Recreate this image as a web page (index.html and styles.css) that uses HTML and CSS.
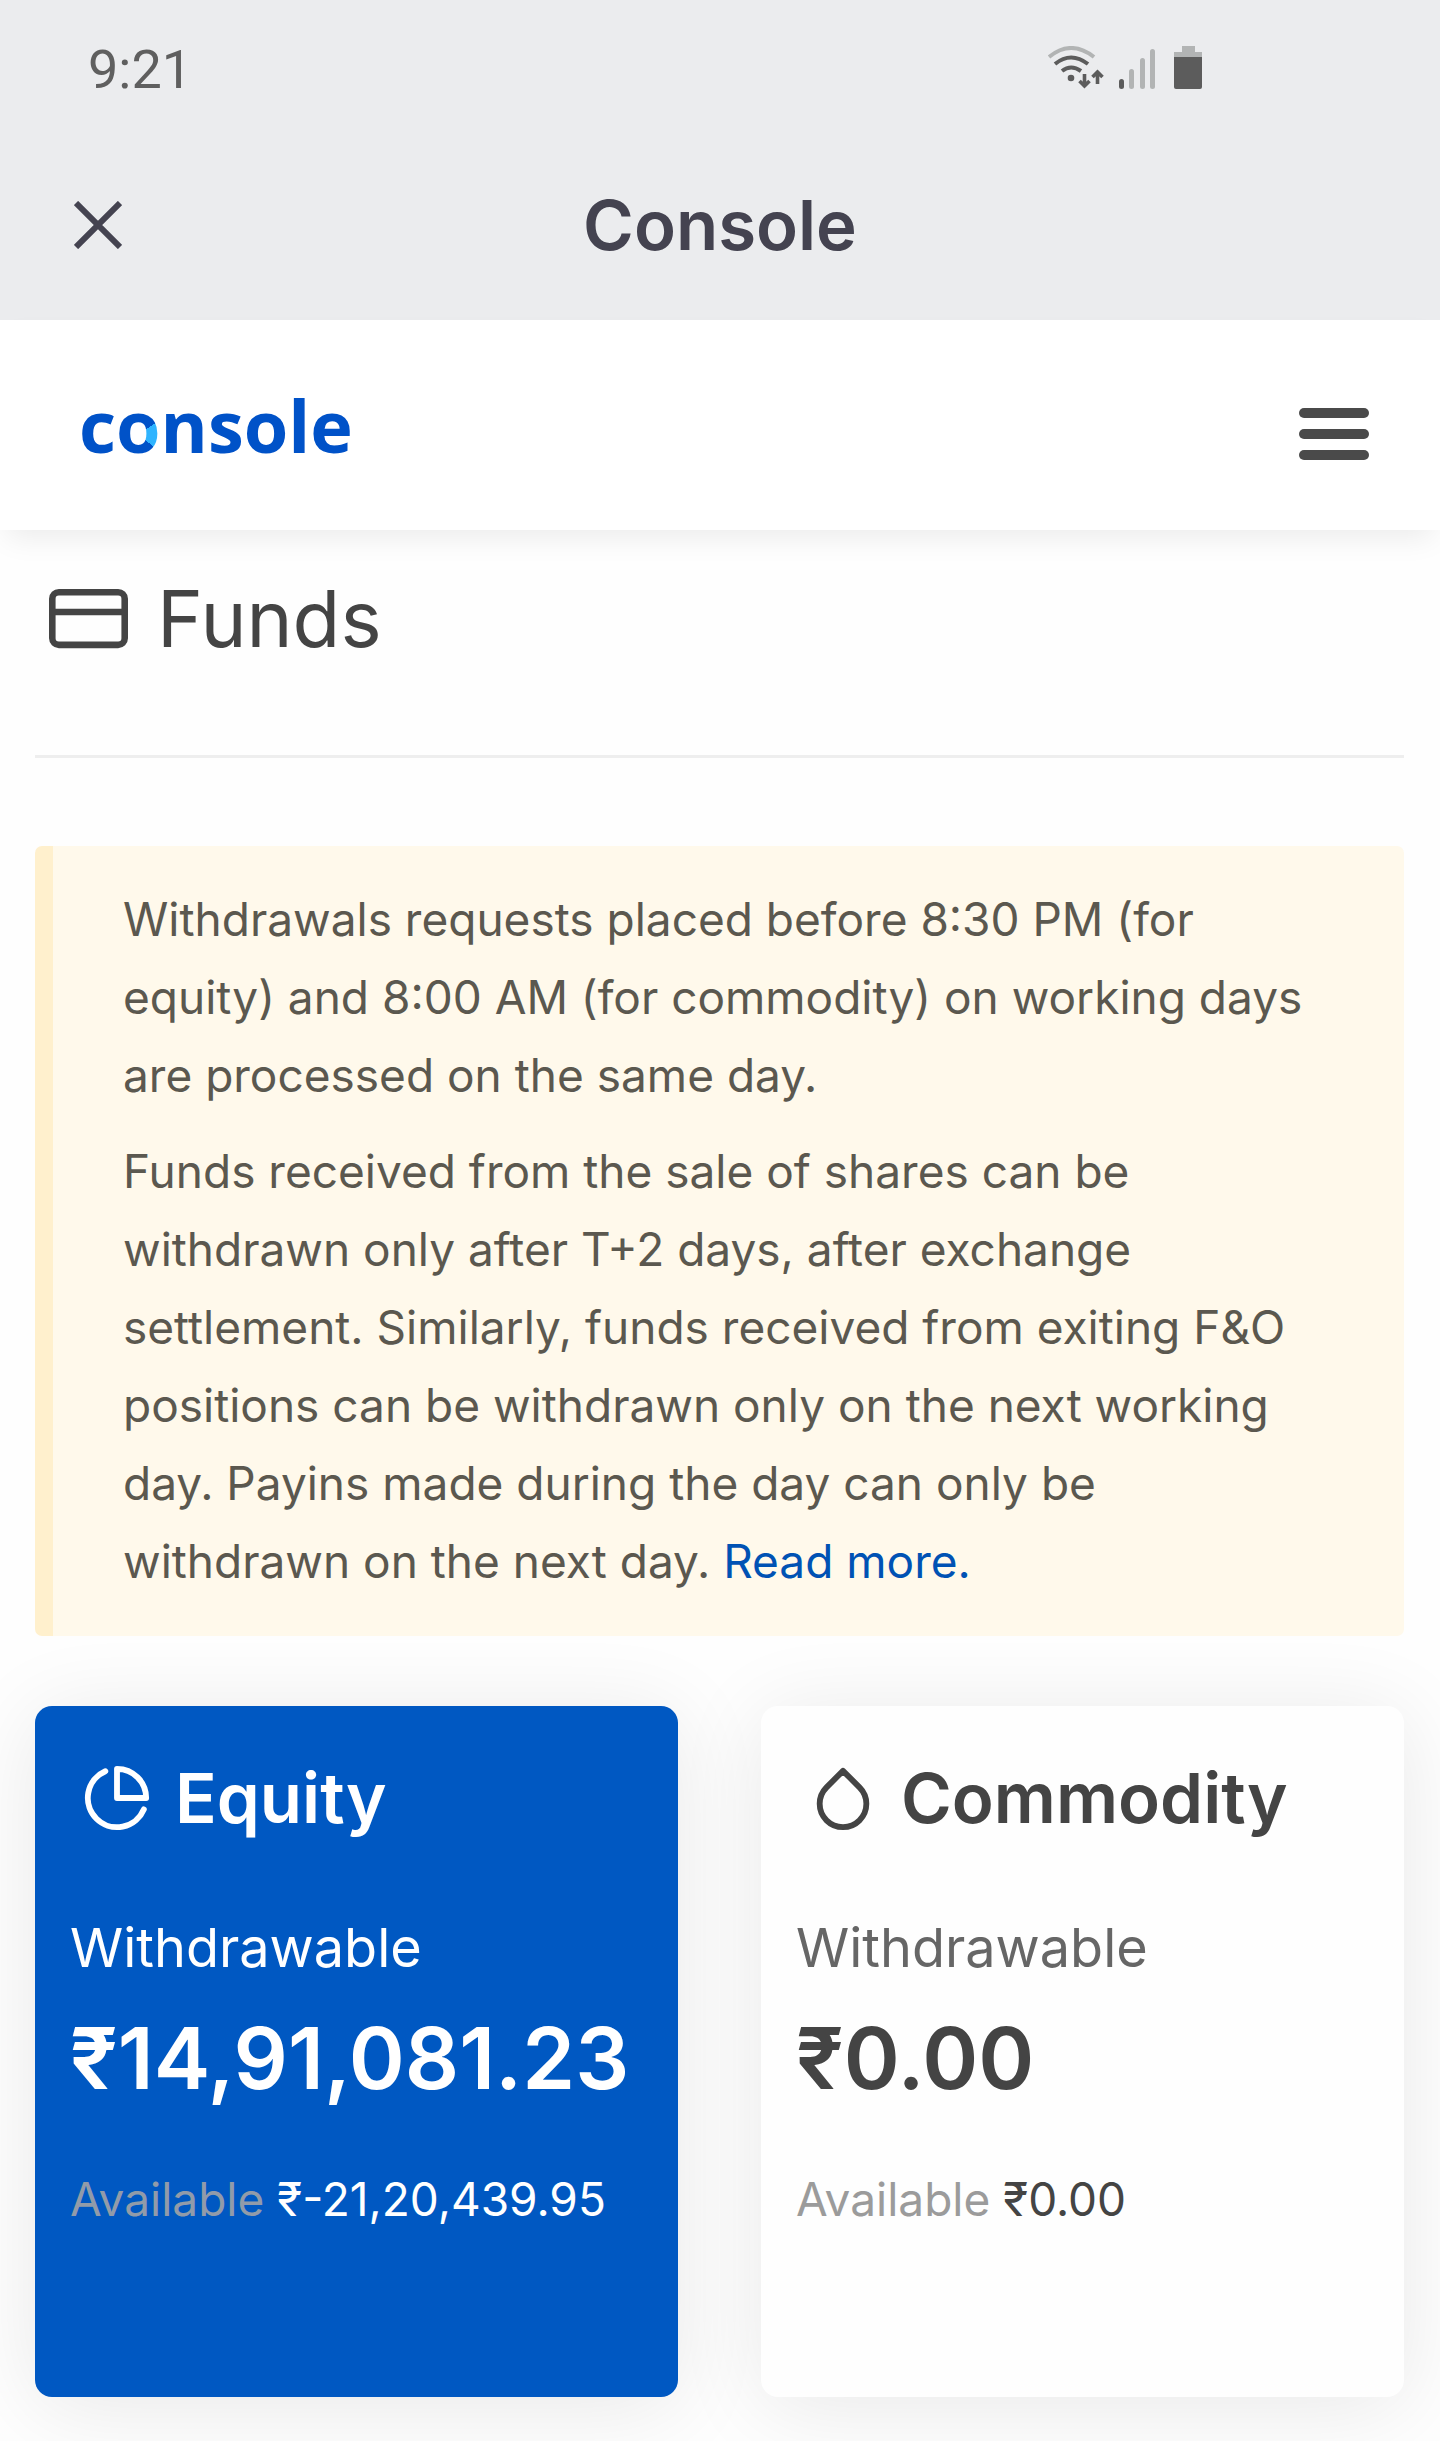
FILE: index.html
```html
<!DOCTYPE html>
<html lang="en">
  <head>
    <meta charset="UTF-8" />
    <meta name="viewport" content="width=device-width, initial-scale=1.0" />
    <title>Console</title>
    <link rel="stylesheet" href="styles.css">
  </head>
  <body>
    <div class="app-header">
      <div class="status-bar">
        <span class="clock">9:21</span>
        <svg class="status-icons" viewBox="0 0 154 43" aria-hidden="true">
          <!-- wifi -->
          <g fill="none" stroke="#5c5c5c" stroke-width="4">
            <path d="M1 11Q23 -7 46 11" stroke="#b2b4b4" />
            <path d="M7 18Q23 5 40 18" />
            <path d="M14 25Q23 18 33 25" />
          </g>
          <circle cx="23" cy="32" r="3.3" fill="#5c5c5c" />
          <g fill="none" stroke="#5c5c5c" stroke-width="3.6">
            <path d="M36.500 28v12M31.500 35l5 5 5-5" />
            <path d="M49.500 38V26M44.500 31l5-5 5 5" />
          </g>
          <!-- signal -->
          <rect x="71" y="33" width="5" height="10" rx="2.500" fill="#5c5c5c" />
          <g fill="#b2b4b4">
            <rect x="81" y="23" width="5" height="20" rx="2.500" />
            <rect x="92" y="12" width="5" height="31" rx="2.500" />
            <rect x="102" y="3" width="5" height="40" rx="2.500" />
            <!-- battery -->
            <path d="M134 0h13v6h7v6h-28V6h8z" />
          </g>
          <path d="M126 11h28v30q0 2-2 2h-24q-2 0-2-2z" fill="#5c5c5c" />
        </svg>
      </div>
      <div class="title-bar">
        <button type="button" class="close-btn" aria-label="Close">
          <svg viewBox="0 0 48 48"><path d="M2 2l44 44M46 2L2 46" /></svg>
        </button>
        <h1>Console</h1>
      </div>
    </div>

    <nav class="navbar">
      <a href="#" class="logo">c<span class="logo-o">o</span>nsole</a>
      <button type="button" class="menu-btn" aria-label="Menu">
        <span></span>
        <span></span>
        <span></span>
      </button>
    </nav>

    <main>
      <h2 class="page-title">
        <svg viewBox="0 0 24 24">
          <rect x="1" y="4" width="22" height="16" rx="2" />
          <path d="M1 10h22" />
        </svg>
        Funds
      </h2>

      <div class="notice">
        <p>
          Withdrawals requests placed before 8:30 PM (for equity) and 8:00 AM
          (for commodity) on working days are processed on the same day.
        </p>
        <p>
          Funds received from the sale of shares can be withdrawn only after
          T+2 days, after exchange settlement. Similarly, funds received from
          exiting F&amp;O positions can be withdrawn only on the next working
          day. Payins made during the day can only be withdrawn on the next
          day. <a href="#">Read more.</a>
        </p>
      </div>

      <div class="cards">
        <section class="card active">
          <h3>
            <svg viewBox="0 0 24 24">
              <path d="M21.210 15.890A10 10 0 1 1 8 2.830" />
              <path d="M22 12A10 10 0 0 0 12 2v10z" />
            </svg>
            Equity
          </h3>
          <div class="label">Withdrawable</div>
          <div class="amount">₹14,91,081.23</div>
          <div class="available"><span>Available</span> ₹-21,20,439.95</div>
        </section>

        <section class="card">
          <h3>
            <svg viewBox="0 0 24 24">
              <path d="M12 2.690l5.660 5.660a8 8 0 1 1-11.310 0z" />
            </svg>
            Commodity
          </h3>
          <div class="label">Withdrawable</div>
          <div class="amount">₹0.00</div>
          <div class="available"><span>Available</span> ₹0.00</div>
        </section>
      </div>
    </main>
  </body>
</html>
```
FILE: styles.css
```css
* {
  box-sizing: border-box;
}
body {
  margin: 0;
  background-color: #fefefe;
  color: #444;
  font-family: Inter, "Noto Sans", sans-serif;
  font-size: 46px;
}
h1,
h2,
h3,
p {
  margin: 0;
}
svg {
  display: block;
  flex: none;
}
button {
  padding: 0;
  border: none;
  background: none;
  cursor: pointer;
}
a {
  color: #0052b4;
  text-decoration: none;
}

/* header */
.app-header {
  background-color: #ebecee;
}
.status-bar {
  display: flex;
  justify-content: space-between;
  align-items: center;
  height: 134px;
  padding: 0 238px 0 88px;
}
.clock {
  padding-top: 4px;
  font-family: Roboto, sans-serif;
  font-size: 54px;
  color: #5f5f5f;
}
.status-icons {
  width: 154px;
  height: 43px;
}
.title-bar {
  display: grid;
  grid-template-columns: 48px 1fr 48px;
  align-items: center;
  height: 186px;
  padding: 0 74px 4px;
}
.close-btn svg {
  width: 48px;
  height: 48px;
  stroke: #444350;
  stroke-width: 6;
}
h1 {
  font-size: 69px;
  font-weight: 600;
  line-height: 84px;
  text-align: center;
  color: #444350;
}

/* navbar */
.navbar {
  display: flex;
  justify-content: space-between;
  align-items: center;
  height: 210px;
  padding: 0 71px 0 79px;
  background-color: #fff;
  box-shadow: 0 14px 28px -7px rgba(0, 0, 0, 0.08);
}
.logo {
  font-family: "Open Sans", sans-serif;
  font-size: 72px;
  font-weight: 700;
  line-height: 92px;
  color: #0052c8;
}
.logo-o {
  background: conic-gradient(from 55deg at 50% 60%, #2fb4ff 73deg, #0052c8 73deg);
  -webkit-background-clip: text;
  background-clip: text;
  color: transparent;
}
.menu-btn {
  display: grid;
  gap: 11px;
  width: 70px;
  margin-top: 18px;
}
.menu-btn span {
  height: 10px;
  border-radius: 5px;
  background-color: #4a4a4a;
}

/* content */
main {
  padding: 0 36px 44px 35px;
}
.page-title {
  display: flex;
  align-items: center;
  gap: 29px;
  padding: 49px 14px 97px;
  border-bottom: 3px solid #eee;
  font-size: 78px;
  font-weight: 400;
  line-height: 79px;
}
.page-title svg {
  width: 79px;
  height: 79px;
}
.page-title svg,
.card svg {
  fill: none;
  stroke: currentColor;
  stroke-width: 2;
  stroke-linecap: round;
  stroke-linejoin: round;
}
.notice {
  margin-top: 88px;
  padding: 34px 70px 36px;
  border-left: 18px solid #fff0cd;
  border-radius: 7px;
  background-color: #fff9eb;
  color: #5b584f;
  line-height: 78px;
}
.notice p + p {
  margin-top: 18px;
}

/* fund cards */
.cards {
  display: grid;
  grid-template-columns: 1fr 1fr;
  gap: 83px;
  margin-top: 70px;
}
.card {
  padding: 57px 35px 159px;
  border-radius: 17px;
  background-color: #fefefe;
  box-shadow: 0 9px 88px rgba(0, 0, 0, 0.09);
}
.card h3 {
  display: flex;
  align-items: center;
  gap: 23px;
  padding-left: 12px;
  font-size: 69px;
  font-weight: 600;
  line-height: 70px;
}
.card svg {
  width: 70px;
  height: 70px;
}
.label {
  margin-top: 75px;
  font-size: 54px;
  line-height: 80px;
  color: #666;
}
.amount {
  margin-top: 19px;
  font-size: 85px;
  font-weight: 600;
  line-height: 104px;
}
.available {
  margin-top: 49px;
  line-height: 78px;
}
.available span {
  color: #9b9b9b;
}
.card.active {
  background-color: #0058c2;
  color: #fff;
}
.card.active .label {
  color: #fff;
}
.card.active .available span {
  color: #919ba9;
}
```
